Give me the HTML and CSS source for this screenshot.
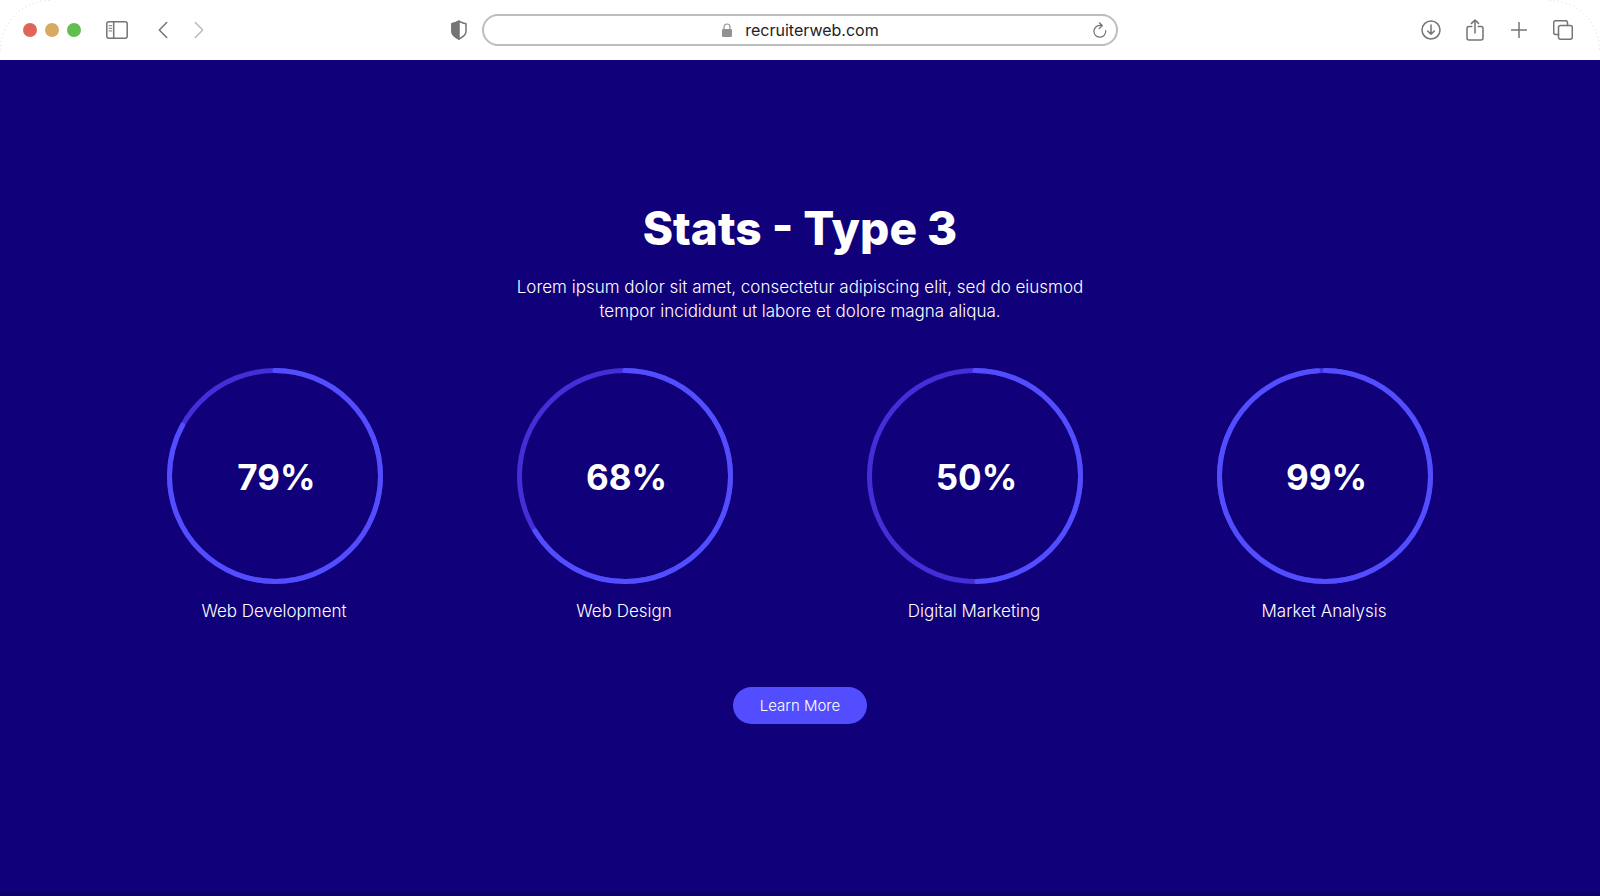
FILE: index.html
```html
<!DOCTYPE html>
<html lang="en">
<head>
  <meta charset="UTF-8">
  <meta name="viewport" content="width=device-width, initial-scale=1.0">
  <title>Stats - Type 3</title>
  <link rel="stylesheet" href="styles.css">
</head>
<body>
  <header class="browser-bar">
    <svg class="corner corner-left" width="52" height="52" viewBox="0 0 52 52"><path d="M.5 50A49.500 49.500 0 0 1 50 .5"/></svg>
    <svg class="corner corner-right" width="52" height="52" viewBox="0 0 52 52"><path d="M2 .5A49.500 49.500 0 0 1 51.500 50"/></svg>

    <div class="bar-left">
      <div class="window-dots">
        <span class="dot red"></span>
        <span class="dot yellow"></span>
        <span class="dot green"></span>
      </div>
      <button type="button" class="icon-btn" aria-label="Sidebar">
        <svg width="22" height="18" viewBox="0 0 22 18"><rect x=".8" y=".8" width="20.400" height="16.400" rx="2"/><path d="M7.700 1v16"/><path class="thin" d="M3 4.700h2.800M3 7.300h2.800M3 9.900h2.800"/></svg>
      </button>
      <div class="nav-btns">
        <button type="button" class="icon-btn" aria-label="Back">
          <svg width="10" height="18" viewBox="0 0 10 18"><path d="M8.700 1.500L1.300 9l7.400 7.500"/></svg>
        </button>
        <button type="button" class="icon-btn faded" aria-label="Forward">
          <svg width="10" height="18" viewBox="0 0 10 18"><path d="M1.300 1.500L8.700 9l-7.400 7.500"/></svg>
        </button>
      </div>
      <button type="button" class="icon-btn shield" aria-label="Privacy report">
        <svg width="16" height="20" viewBox="0 0 16 20"><path d="M8 1.200c2 1.300 4.200 2.100 7 2.500v8.100c0 3.200-3.200 5.200-7 7.200-3.800-2-7-4-7-7.200V3.700c2.800-.4 5-1.200 7-2.500z"/><path class="solid" d="M8 1.200V19c-3.800-2-7-4-7-7.200V3.700c2.800-.4 5-1.200 7-2.500z"/></svg>
      </button>
    </div>

    <div class="url-bar">
      <svg class="lock" width="12" height="14" viewBox="0 0 12 14"><path d="M3 7V4a3 3 0 0 1 6 0v3"/><rect x="1" y="6" width="10" height="8" rx="1"/></svg>
      <span class="url">recruiterweb.com</span>
      <button type="button" class="icon-btn reload" aria-label="Reload">
        <svg width="14" height="16" viewBox="0 0 14 16"><path d="M12.700 8.700A5.900 5.900 0 1 1 6.800 3.400h2.400M6.300.8l3 2.700-3 3"/></svg>
      </button>
    </div>

    <div class="bar-right">
      <button type="button" class="icon-btn" aria-label="Downloads">
        <svg width="20" height="20" viewBox="0 0 20 20"><circle cx="10" cy="10" r="9"/><path d="M10 5v9.300M6.700 11l3.300 3.300 3.300-3.300"/></svg>
      </button>
      <button type="button" class="icon-btn" aria-label="Share">
        <svg width="18" height="22" viewBox="0 0 18 22"><path d="M5.800 7.500H3a2 2 0 0 0-2 2V19a2 2 0 0 0 2 2h12a2 2 0 0 0 2-2V9.500a2 2 0 0 0-2-2h-2.800M9 14V1M5.500 4.400L9 1l3.500 3.400"/></svg>
      </button>
      <button type="button" class="icon-btn" aria-label="New tab">
        <svg width="16" height="16" viewBox="0 0 16 16"><path d="M8 .5v15M.5 8h15"/></svg>
      </button>
      <button type="button" class="icon-btn" aria-label="Tabs">
        <svg width="20" height="20" viewBox="0 0 20 20"><rect x="5.500" y="5.500" width="13.800" height="13.800" rx="2"/><path d="M5.500 14.500H2.700a2 2 0 0 1-2-2V2.700a2 2 0 0 1 2-2h9.800a2 2 0 0 1 2 2v2.800"/></svg>
      </button>
    </div>
  </header>

  <main class="stats-section">
    <h1>Stats - Type 3</h1>
    <p class="intro">Lorem ipsum dolor sit amet, consectetur adipiscing elit, sed do eiusmod tempor incididunt ut labore et dolore magna aliqua.</p>

    <div class="stats">
      <div class="stat">
        <div class="ring">
          <svg viewBox="0 0 216 216"><circle class="track" cx="108" cy="108" r="105.500"/><circle class="progress" cx="108" cy="108" r="105.500" pathLength="100" stroke-dasharray="83 100"/></svg>
          <span class="value">79%</span>
        </div>
        <div class="label">Web Development</div>
      </div>
      <div class="stat">
        <div class="ring">
          <svg viewBox="0 0 216 216"><circle class="track" cx="108" cy="108" r="105.500"/><circle class="progress" cx="108" cy="108" r="105.500" pathLength="100" stroke-dasharray="66.300 100"/></svg>
          <span class="value">68%</span>
        </div>
        <div class="label">Web Design</div>
      </div>
      <div class="stat">
        <div class="ring">
          <svg viewBox="0 0 216 216"><circle class="track" cx="108" cy="108" r="105.500"/><circle class="progress" cx="108" cy="108" r="105.500" pathLength="100" stroke-dasharray="49.700 100"/></svg>
          <span class="value">50%</span>
        </div>
        <div class="label">Digital Marketing</div>
      </div>
      <div class="stat">
        <div class="ring">
          <svg viewBox="0 0 216 216"><circle class="track" cx="108" cy="108" r="105.500"/><circle class="progress" cx="108" cy="108" r="105.500" pathLength="100" stroke-dasharray="98.900 100"/></svg>
          <span class="value">99%</span>
        </div>
        <div class="label">Market Analysis</div>
      </div>
    </div>

    <button type="button" class="learn-btn">Learn More</button>
  </main>
</body>
</html>
```
FILE: styles.css
```css
* {
  box-sizing: border-box;
}

body {
  font-family: Inter, 'Liberation Sans', sans-serif;
  background: #100079;
  color: #fff;
  margin: 0;
  min-height: 100vh;
  display: flex;
  flex-direction: column;
}

/* browser bar */
.browser-bar {
  position: relative;
  display: grid;
  grid-template-columns: 1fr 40% 1fr;
  align-items: center;
  height: 60px;
  background: #fff;
}

.corner {
  position: absolute;
  top: 0;
  fill: none;
  stroke: #d4d3e0;
  stroke-width: 1;
  stroke-dasharray: 1 3;
}

.corner-left {
  left: 0;
}

.corner-right {
  right: 0;
}

.bar-left,
.bar-right,
.window-dots,
.nav-btns {
  display: flex;
  align-items: center;
}

.bar-left {
  gap: 30px;
  padding: 0 13px 0 23px;
}

.window-dots {
  gap: 8px;
  margin-right: -5px;
}

.dot {
  width: 14px;
  height: 14px;
  border-radius: 50%;
}

.red {
  background: #e0645a;
}

.yellow {
  background: #d8a962;
}

.green {
  background: #61be4f;
}

.nav-btns {
  gap: 26px;
}

.icon-btn {
  display: flex;
  justify-content: center;
  padding: 0;
  border: none;
  background: none;
  color: #747474;
  cursor: pointer;
}

.icon-btn svg {
  fill: none;
  stroke: currentColor;
  stroke-width: 1.5;
  stroke-linecap: round;
  stroke-linejoin: round;
}

.icon-btn .thin {
  stroke-width: 1;
}

.icon-btn .solid {
  fill: currentColor;
}

.faded {
  color: #b9b9be;
}

.shield {
  margin-left: auto;
}

.url-bar {
  position: relative;
  display: flex;
  align-items: center;
  justify-content: center;
  gap: 12px;
  height: 32px;
  margin: 0 2px;
  border: 2px solid #bdbdbf;
  border-radius: 16px;
}

.lock {
  fill: #929292;
}

.lock path {
  fill: none;
  stroke: #929292;
  stroke-width: 1.2;
}

.url {
  color: #222;
  font-size: 16px;
  line-height: 24px;
}

.reload {
  position: absolute;
  right: 9px;
}

.reload svg {
  stroke-width: 1.2;
}

.bar-right {
  justify-content: flex-end;
  gap: 22px;
  padding-right: 26px;
}

.bar-right .icon-btn {
  width: 22px;
}

/* stats */
.stats-section {
  flex: 1;
  display: flex;
  flex-direction: column;
  align-items: center;
  padding: 140px 100px 60px;
  border-bottom: 4px solid #0e006a;
}

h1 {
  margin: 0;
  font-size: 46px;
  line-height: 56px;
  font-weight: 800;
}

.intro {
  max-width: 600px;
  margin: 19px 0 45px;
  font-size: 17px;
  line-height: 24px;
  font-weight: 300;
  text-align: center;
}

.stats {
  display: grid;
  grid-template-columns: repeat(4, 1fr);
  width: 100%;
}

.stat {
  display: flex;
  flex-direction: column;
  align-items: center;
  gap: 15px;
}

.ring {
  display: grid;
  place-items: center;
  width: 216px;
  height: 216px;
}

.ring svg,
.value {
  grid-area: 1 / 1;
}

.ring svg {
  width: 100%;
  height: 100%;
  fill: none;
  stroke-width: 5;
  transform: rotate(-90deg);
}

.track {
  stroke: #432fd7;
}

.progress {
  stroke: #524dff;
  stroke-linecap: round;
}

.value {
  padding: 2px 0 0 3px;
  font-size: 35px;
  line-height: 40px;
  font-weight: 700;
}

.label {
  padding-right: 2px;
  font-size: 17px;
  line-height: 24px;
  font-weight: 300;
}

.learn-btn {
  margin-top: 64px;
  padding: 6px 27px;
  border: none;
  border-radius: 20px;
  background: #524dff;
  color: #fff;
  font-family: inherit;
  font-size: 15px;
  line-height: 25px;
  font-weight: 300;
  cursor: pointer;
}
```
